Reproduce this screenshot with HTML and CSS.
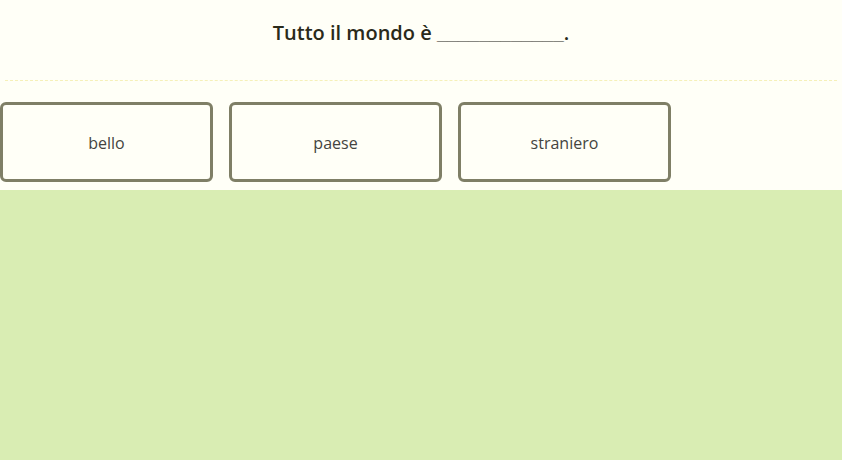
FILE: index.html
```html
<!DOCTYPE html>
<html lang="it">
<head>
<meta charset="utf-8">
<title>Quiz</title>
<link rel="stylesheet" href="styles.css">
</head>
<body>
<div class="top">
  <div class="prompt">Tutto il mondo è <span class="blank">____________</span>.</div>
  <div class="choices">
    <button class="choice">bello</button>
    <button class="choice">paese</button>
    <button class="choice">straniero</button>
  </div>
</div>
<div class="bottom"></div>
</body>
</html>
```
FILE: styles.css
```css
html, body {
  margin: 0;
  padding: 0;
  height: 100%;
}
body {
  display: flex;
  flex-direction: column;
  font-family: "Open Sans", "Noto Sans", sans-serif;
  background: #d9edb3;
}
.top {
  background: #fffff7;
  padding-bottom: 8px;
}
.prompt {
  margin: 0 5px;
  height: 81px;
  box-sizing: border-box;
  padding-top: 19px;
  border-bottom: 1px dashed #f6f0b8;
  text-align: center;
  font-size: 20px;
  font-weight: 600;
  color: #2a2a1a;
}
.blank {
  font-family: "Liberation Sans", sans-serif;
  font-size: 19px;
}
.choices {
  display: flex;
  gap: 16px;
  padding-top: 21px;
}
.choice {
  width: 213px;
  height: 80px;
  box-sizing: border-box;
  border: 3px solid #7f7f66;
  border-radius: 6px;
  background: transparent;
  font-family: inherit;
  font-size: 16px;
  color: #444440;
  padding-top: 2px;
  cursor: pointer;
}
.bottom {
  flex: 1;
}
```
